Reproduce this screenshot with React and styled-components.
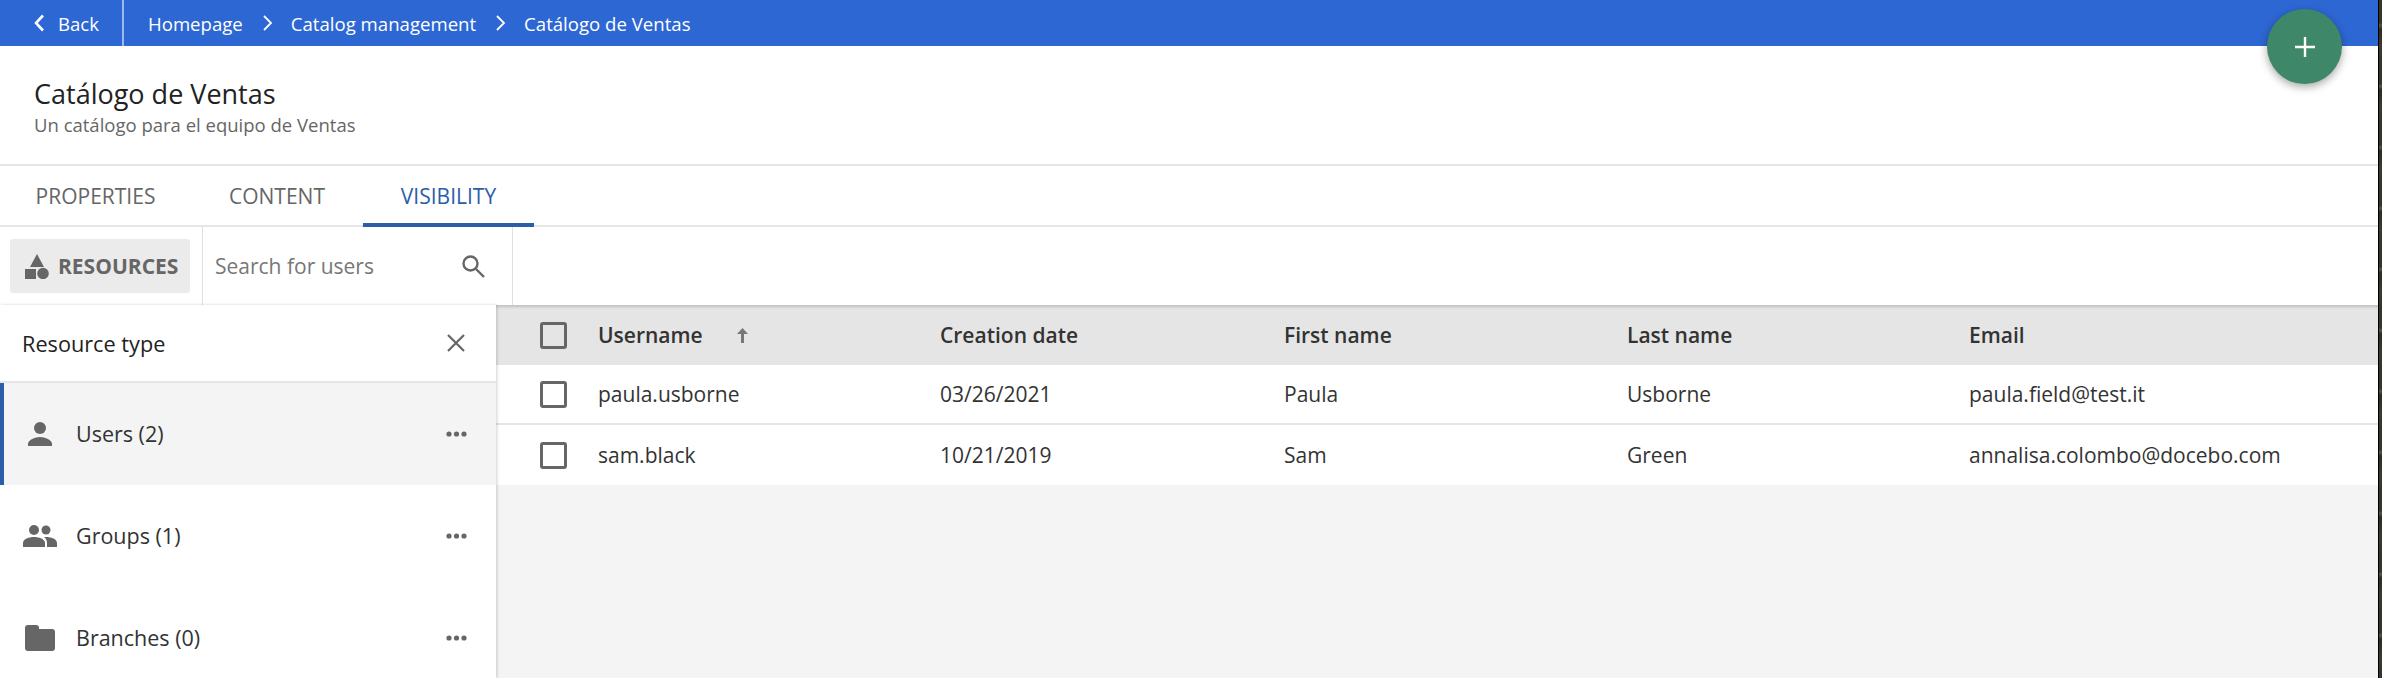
import React from "react";
import styled, { createGlobalStyle } from "styled-components";

const GlobalStyle = createGlobalStyle`
  html, body {
    margin: 0;
    padding: 0;
    height: 100%;
    background: #2b2a24;
    overflow: hidden;
  }
  * {
    box-sizing: border-box;
  }
`;

const Screen = styled.div`
  display: flex;
  width: 2382px;
  height: 678px;
`;

const Strip = styled.div`
  flex: 1;
  border-left: 1px solid #000;
  background: repeating-linear-gradient(
    180deg,
    #35362a 0,
    #35362a 23px,
    #5a5648 25px,
    #2c2c22 29px,
    #3d3a2e 47px,
    #35362a 61px
  );
`;

const Page = styled.div`
  position: relative;
  width: 2378px;
  height: 678px;
  flex-shrink: 0;
  background: #f4f4f4;
  font-family: "Open Sans", sans-serif;
  color: #333;
  overflow: hidden;
`;

const TopBar = styled.div`
  display: flex;
  align-items: center;
  height: 46px;
  background: #2d67d3;
  color: #fff;
  font-size: 18.6px;
`;

const BackLink = styled.div`
  display: flex;
  align-items: center;
  gap: 13px;
  width: 124px;
  height: 100%;
  padding-left: 33px;
  border-right: 2px solid #9db9ec;
`;

const Crumbs = styled.div`
  display: flex;
  align-items: center;
  gap: 18px;
  padding-left: 24px;
`;

const Header = styled.div`
  display: flex;
  flex-direction: column;
  justify-content: center;
  height: 120px;
  padding: 3px 34px 0;
  background: #fff;
  border-bottom: 2px solid #e6e6e6;
`;

const Title = styled.div`
  font-size: 27px;
  line-height: 36px;
  color: #222;
`;

const Subtitle = styled.div`
  font-size: 18.5px;
  line-height: 25px;
  color: #666;
`;

const Tabs = styled.div`
  display: flex;
  height: 61px;
  background: #fff;
  border-bottom: 2px solid #e6e6e6;
`;

const Tab = styled.div`
  display: flex;
  align-items: center;
  justify-content: center;
  height: 61px;
  width: ${(p) => p.$width}px;
  padding-top: 2px;
  font-size: 21px;
  font-weight: 500;
  color: ${(p) => (p.$active ? "#2a5ea8" : "#666")};
  border-bottom: 4px solid ${(p) => (p.$active ? "#2a5ea8" : "transparent")};
`;

const Toolbar = styled.div`
  display: flex;
  height: 78px;
  background: #fff;
`;

const ResourcesCell = styled.div`
  display: flex;
  align-items: center;
  width: 203px;
  padding-left: 10px;
  border-right: 1px solid #e0e0e0;
`;

const ResourcesButton = styled.div`
  display: flex;
  align-items: center;
  gap: 9px;
  width: 180px;
  height: 54px;
  padding-left: 15px;
  background: #ebebeb;
  border-radius: 3px;
  color: #666;
  font-size: 21px;
  font-weight: 700;
`;

const SearchCell = styled.div`
  display: flex;
  align-items: center;
  justify-content: space-between;
  width: 310px;
  padding: 0 27px 0 12px;
  border-right: 1px solid #e0e0e0;
  color: #777;
  font-size: 21px;
`;

const Body = styled.div`
  display: flex;
  height: 373px;
`;

const Sidebar = styled.div`
  width: 496px;
  flex-shrink: 0;
  background: #fff;
  box-shadow: 1px 0 3px rgba(0, 0, 0, 0.18);
  z-index: 1;
`;

const SidebarHead = styled.div`
  display: flex;
  align-items: center;
  justify-content: space-between;
  height: 78px;
  padding: 0 31px 0 22px;
  border-bottom: 2px solid #e6e6e6;
  font-size: 21.7px;
  color: #222;
`;

const SideRow = styled.div`
  display: flex;
  align-items: center;
  height: 102px;
  padding: 0 29px 0 23px;
  background: ${(p) => (p.$active ? "#f4f4f4" : "#fff")};
  box-shadow: ${(p) => (p.$active ? "inset 4px 0 0 #2a5ea8" : "none")};
  font-size: 21.5px;
  color: #333;
`;

const SideIcon = styled.div`
  display: flex;
  justify-content: center;
  width: 34px;
  margin-right: 19px;
  color: #666;
`;

const SideLabel = styled.div`
  flex: 1;
  padding-bottom: 1px;
`;

const TableArea = styled.div`
  position: relative;
  flex: 1;
  &::after {
    content: "";
    position: absolute;
    inset: 0 0 auto 0;
    height: 4px;
    background: linear-gradient(rgba(0, 0, 0, 0.16), rgba(0, 0, 0, 0));
  }
`;

const TableRow = styled.div`
  display: grid;
  grid-template-columns: 102px 342px 344px 343px 342px 1fr;
  align-items: center;
  height: 60px;
  background: ${(p) => (p.$head ? "#e5e5e5" : "#fff")};
  border-bottom: ${(p) => (p.$line ? "2px solid #e6e6e6" : "none")};
  font-size: 21px;
  font-weight: ${(p) => (p.$head ? 600 : 400)};
  color: #333;
`;

const CheckCell = styled.div`
  padding-left: 44px;
`;

const Checkbox = styled.div`
  width: 27px;
  height: 27px;
  border: 3px solid #666;
  border-radius: 3px;
  background: ${(p) => (p.$head ? "transparent" : "#fff")};
`;

const HeadName = styled.div`
  display: flex;
  align-items: center;
  gap: 34px;
`;

const Fab = styled.div`
  position: absolute;
  left: 2267px;
  top: 9px;
  display: flex;
  align-items: center;
  justify-content: center;
  width: 75px;
  height: 75px;
  border-radius: 50%;
  background: #3e8768;
  box-shadow: 0 3px 8px rgba(0, 0, 0, 0.35);
`;

const Chevron = ({ left }) => (
  <svg width="12" height="18" viewBox="0 0 12 18" fill="none" stroke="#fff" strokeWidth={left ? 2.6 : 1.8}>
    <path d={left ? "M10 1.5 3 9l7 7.5" : "M3 2l7 7-7 7"} />
  </svg>
);

const Dots = () => (
  <svg width="21" height="6" viewBox="0 0 21 6" fill="#666">
    <circle cx="3" cy="3" r="2.6" />
    <circle cx="10.500" cy="3" r="2.6" />
    <circle cx="18" cy="3" r="2.6" />
  </svg>
);

const rows = [
  ["paula.usborne", "03/26/2021", "Paula", "Usborne", "paula.field@test.it"],
  ["sam.black", "10/21/2019", "Sam", "Green", "annalisa.colombo@docebo.com"],
];

export default function App() {
  return (
    <Screen>
      <GlobalStyle />
      <Page>
        <TopBar>
          <BackLink>
            <Chevron left />
            <span>Back</span>
          </BackLink>
          <Crumbs>
            <span>Homepage</span>
            <Chevron />
            <span>Catalog management</span>
            <Chevron />
            <span>Catálogo de Ventas</span>
          </Crumbs>
        </TopBar>
        <Header>
          <Title>Catálogo de Ventas</Title>
          <Subtitle>Un catálogo para el equipo de Ventas</Subtitle>
        </Header>
        <Tabs>
          <Tab $width={191}>PROPERTIES</Tab>
          <Tab $width={172}>CONTENT</Tab>
          <Tab $width={171} $active>VISIBILITY</Tab>
        </Tabs>
        <Toolbar>
          <ResourcesCell>
            <ResourcesButton>
              <svg width="24" height="25" viewBox="0 0 24 25" fill="#666">
                <path d="M12 0 19 13H5z" />
                <rect x="0" y="15" width="11" height="10" />
                <circle cx="18" cy="19.500" r="5.800" />
              </svg>
              <span>RESOURCES</span>
            </ResourcesButton>
          </ResourcesCell>
          <SearchCell>
            <span>Search for users</span>
            <svg width="24" height="24" viewBox="0 0 24 24" fill="none" stroke="#666" strokeWidth="2.4">
              <circle cx="9.5" cy="9.5" r="7" />
              <path d="m15 15 8 8" />
            </svg>
          </SearchCell>
        </Toolbar>
        <Body>
          <Sidebar>
            <SidebarHead>
              <span>Resource type</span>
              <svg width="18" height="18" viewBox="0 0 18 18" stroke="#666" strokeWidth="2.2">
                <path d="m1 1 16 16M17 1 1 17" />
              </svg>
            </SidebarHead>
            <SideRow $active>
              <SideIcon>
                <svg width="24" height="24" viewBox="0 0 24 24" fill="#666">
                  <circle cx="12" cy="6" r="6" />
                  <path d="M0 24v-2c0-4 7-7 12-7s12 3 12 7v2z" />
                </svg>
              </SideIcon>
              <SideLabel>Users (2)</SideLabel>
              <Dots />
            </SideRow>
            <SideRow>
              <SideIcon>
                <svg width="34" height="22" viewBox="0 0 34 22" fill="#666">
                  <circle cx="11" cy="5" r="5" />
                  <circle cx="23" cy="5" r="4.500" />
                  <path d="M0 22v-4c0-4 6-6 11-6s11 2 11 6v4z" />
                  <path d="M24 22v-4c0-2.500-1-4.500-3-6 6-.5 13 1.500 13 6v4z" />
                </svg>
              </SideIcon>
              <SideLabel>Groups (1)</SideLabel>
              <Dots />
            </SideRow>
            <SideRow>
              <SideIcon>
                <svg width="30" height="26" viewBox="0 0 30 26" fill="#666">
                  <path d="M3 0h8a3 3 0 0 1 3 3v1h13a3 3 0 0 1 3 3v16a3 3 0 0 1-3 3H3a3 3 0 0 1-3-3V3a3 3 0 0 1 3-3z" />
                </svg>
              </SideIcon>
              <SideLabel>Branches (0)</SideLabel>
              <Dots />
            </SideRow>
          </Sidebar>
          <TableArea>
            <TableRow $head>
              <CheckCell>
                <Checkbox $head />
              </CheckCell>
              <HeadName>
                <span>Username</span>
                <svg width="11" height="15" viewBox="0 0 11 15" fill="#777">
                  <path d="M5.500 0 11 6H7v9H4V6H0z" />
                </svg>
              </HeadName>
              <div>Creation date</div>
              <div>First name</div>
              <div>Last name</div>
              <div>Email</div>
            </TableRow>
            {rows.map((row, i) => (
              <TableRow key={row[0]} $line={i === 0}>
                <CheckCell>
                  <Checkbox />
                </CheckCell>
                {row.map((cell) => (
                  <div key={cell}>{cell}</div>
                ))}
              </TableRow>
            ))}
          </TableArea>
        </Body>
        <Fab>
          <svg width="20" height="20" viewBox="0 0 20 20" stroke="#fff" strokeWidth="2.4">
            <path d="M10 0v20M0 10h20" />
          </svg>
        </Fab>
      </Page>
      <Strip />
    </Screen>
  );
}
